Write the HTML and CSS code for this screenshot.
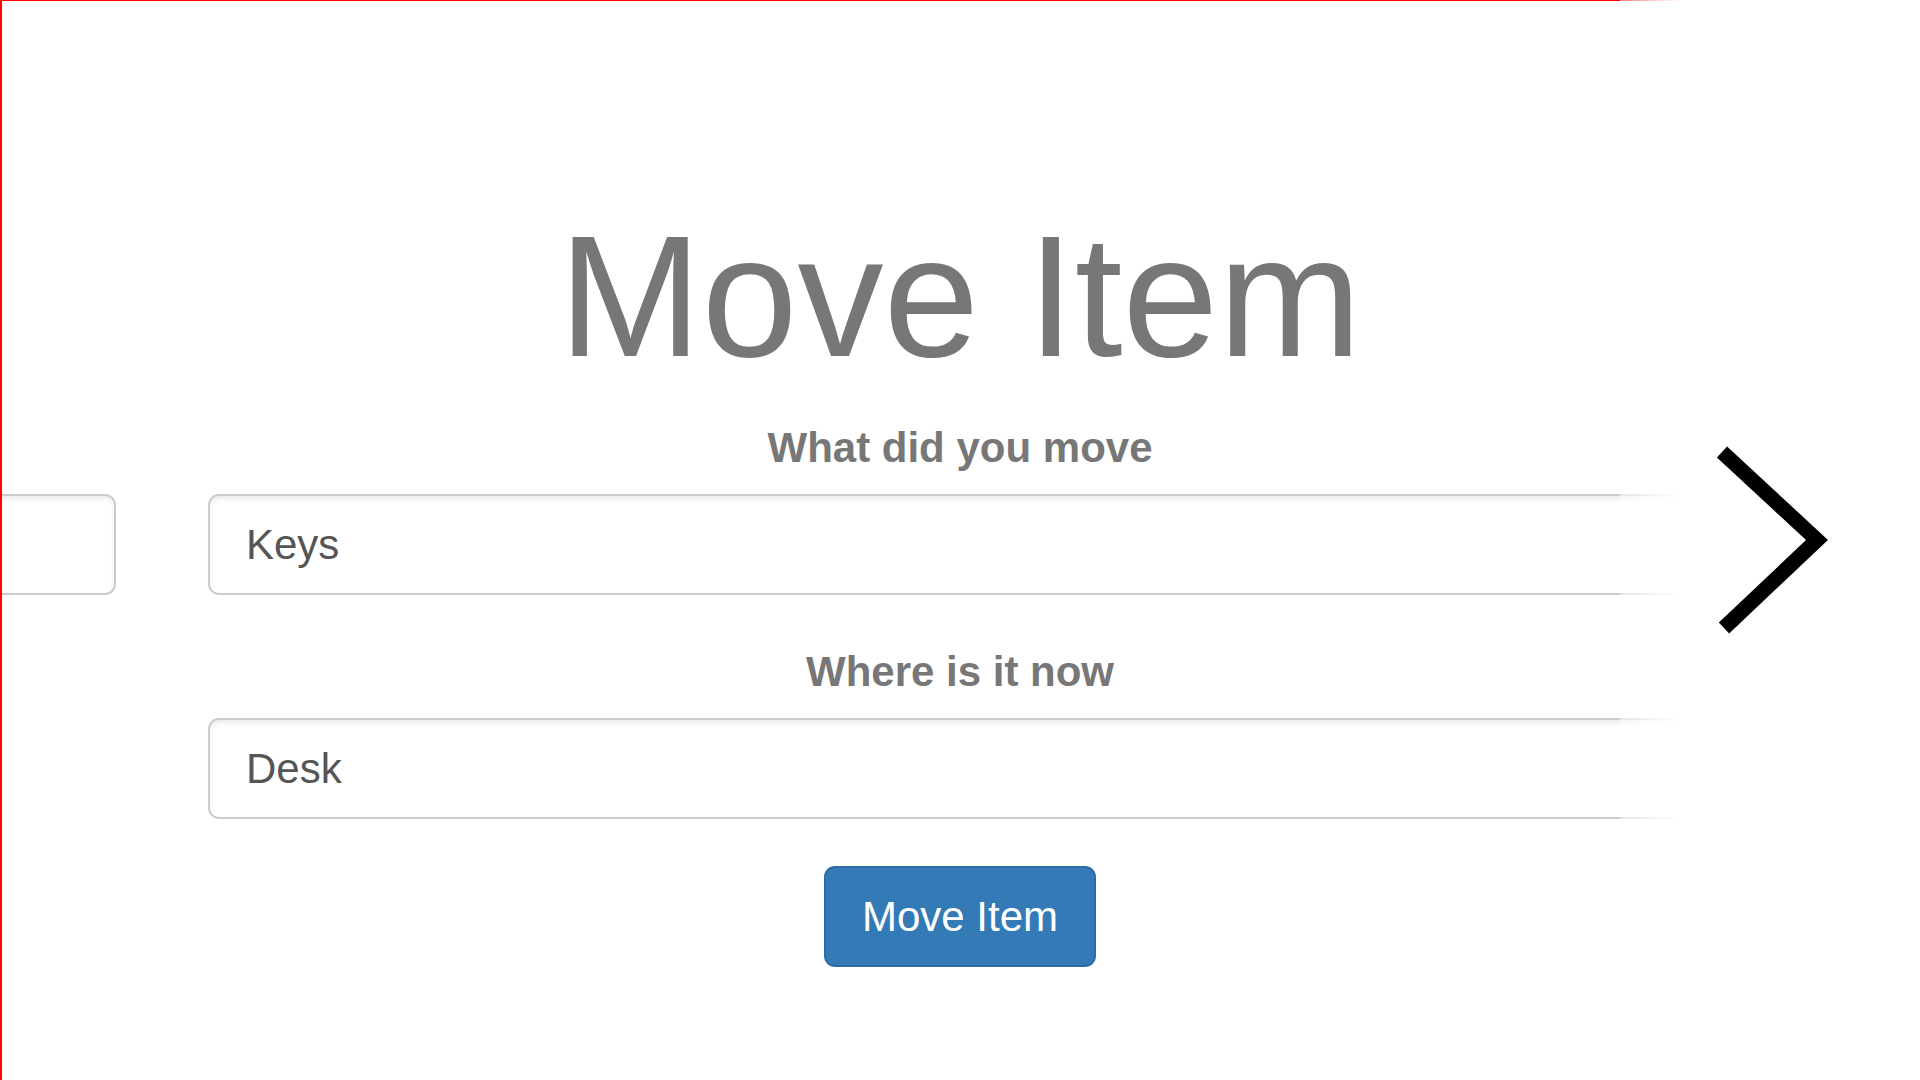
FILE: index.html
```html
<!DOCTYPE html>
<html lang="en">
<head>
<meta charset="utf-8">
<title>Move Item</title>
<link rel="stylesheet" href="styles.css">
</head>
<body>
<div class="viewport">
  <div class="frame">
    <div class="track">
      <section class="slide slide-prev">
        <div class="group">
          <div class="field" role="textbox" aria-label="Previous field"></div>
        </div>
      </section>
      <section class="slide">
        <h1 class="title">Move Item</h1>
        <form class="form">
          <div class="group">
            <label class="label" id="what-label">What did you move</label>
            <div class="field" role="textbox" aria-labelledby="what-label" contenteditable="true">Keys</div>
          </div>
          <div class="group">
            <label class="label" id="where-label">Where is it now</label>
            <div class="field" role="textbox" aria-labelledby="where-label" contenteditable="true">Desk</div>
          </div>
          <button class="btn" type="button">Move Item</button>
        </form>
      </section>
    </div>
  </div>
  <div class="fade"></div>
  <svg class="next" viewBox="0 0 140 220" width="140" height="220" aria-label="Next">
    <polyline points="22,22 117,110 24,198" fill="none" stroke="#000" stroke-width="15" stroke-linejoin="miter" stroke-linecap="butt"/>
  </svg>
</div>
</body>
</html>
```

FILE: styles.css
```css
html, body {
  margin: 0;
  padding: 0;
  background: #fff;
  overflow: hidden;
}

body {
  font-family: "Liberation Sans", Arial, Helvetica, sans-serif;
}

.viewport {
  position: relative;
  width: 1920px;
  height: 1080px;
  overflow: hidden;
}

.frame {
  height: 1080px;
  box-sizing: border-box;
  border-left: 2px solid #ff0000;
  border-top: 1px solid #ff0000;
  overflow: hidden;
}

.track {
  display: flex;
  gap: 92px;
  margin-left: -1390px;
}

.slide {
  flex: none;
  width: 1504px;
  padding-top: 201px;
  text-align: center;
}

.slide-prev {
  padding-top: 493px;
}

.title {
  margin: 0 0 27px;
  font-size: 172px;
  line-height: 189px;
  font-weight: 400;
  color: #777;
}

.form {
  display: flex;
  flex-direction: column;
  align-items: center;
}

.group {
  width: 100%;
  margin-bottom: 47px;
}

.label {
  display: block;
  margin-bottom: 16px;
  font-size: 42px;
  line-height: 60px;
  font-weight: 700;
  color: #777;
}

.field {
  display: flex;
  align-items: center;
  width: 100%;
  height: 101px;
  box-sizing: border-box;
  padding: 0 36px;
  border: 2px solid #ccc;
  border-radius: 11px;
  box-shadow: inset 0 3px 4px rgba(0, 0, 0, 0.075);
  background: #fff;
  font-size: 42px;
  line-height: 60px;
  color: #555;
  text-align: left;
  outline: none;
}

.btn {
  height: 101px;
  box-sizing: border-box;
  padding: 0 36px;
  border: 2px solid #2e6da4;
  border-radius: 11px;
  background: #337ab7;
  color: #fff;
  font-family: "Liberation Sans", Arial, Helvetica, sans-serif;
  font-size: 42px;
  line-height: 60px;
}

.fade {
  position: absolute;
  top: 0;
  left: 1620px;
  width: 300px;
  height: 100%;
  background: linear-gradient(to right, rgba(255, 255, 255, 0.5) 0, #fff 60px);
}

.next {
  position: absolute;
  left: 1700px;
  top: 430px;
}
```
